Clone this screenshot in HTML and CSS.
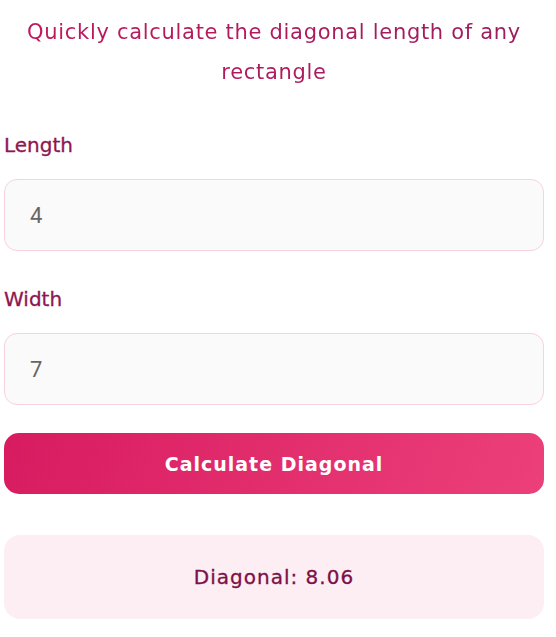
FILE: index.html
```html
<!DOCTYPE html>
<html>
<head>
  <meta charset="UTF-8" />
  <title>Rectangle Diagonal Calculator</title>
  <link rel="stylesheet" href="styles.css">
</head>
<body>
  <div class="container">
    <p class="subtitle">Quickly calculate the diagonal length of any rectangle</p>

    <div class="form-group">
      <label for="length">Length</label>
      <input type="number" id="length" value="4">
    </div>
    <div class="form-group last">
      <label for="width">Width</label>
      <input type="number" id="width" value="7">
    </div>

    <button onclick="calculateDiagonal()">Calculate Diagonal</button>

    <div id="result" class="result">Diagonal: 8.06</div>
  </div>

  <script>
    function calculateDiagonal() {
      var l = parseFloat(document.getElementById('length').value) || 0;
      var w = parseFloat(document.getElementById('width').value) || 0;
      var d = Math.sqrt(l * l + w * w);
      document.getElementById('result').textContent = 'Diagonal: ' + d.toFixed(2);
    }
  </script>
</body>
</html>
```

FILE: styles.css
```css
body {
  font-family: 'DejaVu Sans', sans-serif;
  background-color: #fff;
  margin: 0;
  padding: 0;
}
.container {
  width: 540px;
  margin: 0 0 0 4px;
}
.subtitle {
  margin: 12px 0 38px;
  text-align: center;
  font-size: 21px;
  line-height: 40px;
  letter-spacing: 0.7px;
  background: linear-gradient(90deg, #c2185b, #9b1d5e);
  -webkit-background-clip: text;
  background-clip: text;
  color: transparent;
}
.form-group {
  margin-bottom: 33px;
}
.form-group.last {
  margin-bottom: 28px;
}
label {
  display: block;
  font-size: 20px;
  line-height: 30px;
  color: #8e1652;
  -webkit-text-stroke: 0.3px #8e1652;
  margin-bottom: 19px;
}
input {
  display: block;
  box-sizing: border-box;
  width: 100%;
  height: 72px;
  padding: 0 25px;
  font-family: 'Roboto', 'Liberation Sans', sans-serif;
  font-size: 22px;
  color: #666;
  background-color: #fafafa;
  border: 1px solid #f6d3de;
  border-radius: 13px;
  outline: none;
  -moz-appearance: textfield;
}
input::-webkit-outer-spin-button,
input::-webkit-inner-spin-button {
  -webkit-appearance: none;
  margin: 0;
}
button {
  display: block;
  width: 100%;
  height: 61px;
  border: none;
  border-radius: 15px;
  background: linear-gradient(110deg, #d81b60, #ec407a);
  color: #fff;
  font-family: inherit;
  font-size: 19px;
  font-weight: bold;
  letter-spacing: 1px;
  cursor: pointer;
}
.result {
  margin-top: 41px;
  height: 84px;
  box-sizing: border-box;
  display: flex;
  align-items: center;
  justify-content: center;
  background-color: #fdeef3;
  border-radius: 16px;
  font-size: 20px;
  letter-spacing: 1px;
  color: #7b1048;
  -webkit-text-stroke: 0.3px #7b1048;
}
```
